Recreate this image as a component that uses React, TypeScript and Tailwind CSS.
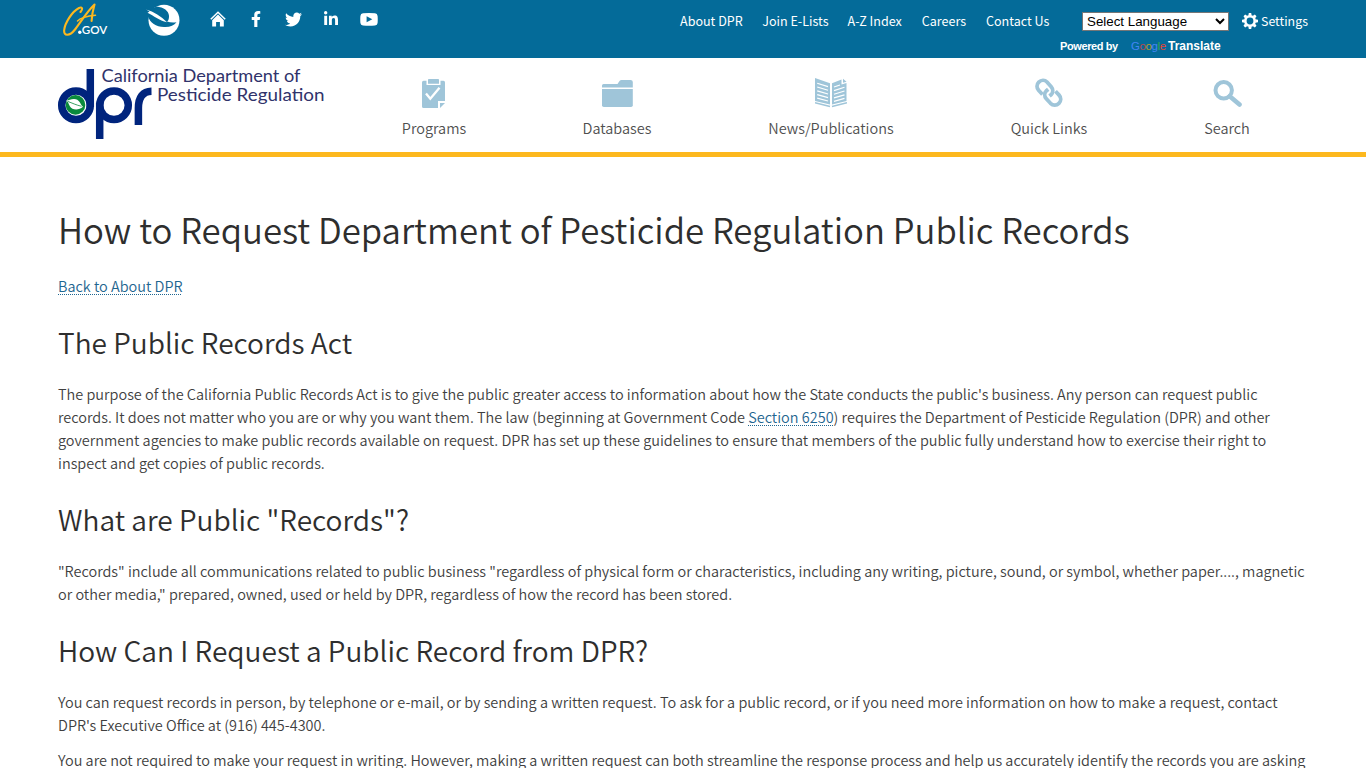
import React from 'react';
import { FaFacebookF, FaTwitter, FaLinkedinIn } from 'react-icons/fa';

const CaGovLogo = () => (
  <svg width="46" height="35" viewBox="0 0 46 35" fill="none">
    <path d="M17.500 9C20 6 19.500 3.500 16 5C9 8.500 2 20 1.200 27C0.500 33.500 6.500 33.500 12 26.500C16 21.500 24 8.500 31.500 1.500C29.800 7.500 28.800 12 28.600 18" stroke="#fdb81e" strokeWidth="2.100" strokeLinecap="round" strokeLinejoin="round" />
    <path d="M14.500 18C18 14.500 26 12.800 32.500 12.200" stroke="#fdb81e" strokeWidth="1.500" strokeLinecap="round" />
    <circle cx="16.800" cy="29.300" r="1.700" fill="#fff" />
    <text x="18.800" y="31" textLength="25.500" lengthAdjust="spacingAndGlyphs" fontSize="11.500" fontWeight="600" fill="#fff" fontFamily="Lato, sans-serif">GOV</text>
  </svg>
);

const EpaLogo = () => (
  <svg width="34" height="34" viewBox="0 0 34 34">
    <circle cx="18" cy="17.200" r="15.500" fill="#fff" />
    <path d="M2 13C3 7 8 2.800 13 4C20 5 23.500 10 23 14C22.700 17 22 18 21 18.500C24 19.600 27 19.800 30.500 19.300C28 22.500 24 24.300 18 24C10 23.800 4 20 2 13Z" fill="#046b99" />
    <path d="M0 6.500L3.500 8.600L1.500 9.800C8 13 13 17.500 21 19.200C15 13 8 8.800 0 6.500Z" fill="#fff" />
  </svg>
);

const HomeIcon = () => (
  <svg width="16" height="16" viewBox="0 0 16 16" fill="none">
    <path d="M0.800 8.300L8 1.200L15.200 8.300" stroke="#fff" strokeWidth="1.500" />
    <path d="M8 3.600L13.800 9.300V15.500H9.900V11H6.100V15.500H2.200V9.300Z" fill="#fff" />
  </svg>
);

const YoutubeIcon = () => (
  <svg width="18" height="13" viewBox="0 0 18 13">
    <path fillRule="evenodd" d="M3 0.300Q9 -0.200 15 0.300Q17.400 0.500 17.600 3Q17.900 6.500 17.600 10Q17.400 12.300 15 12.500Q9 12.900 3 12.500Q0.600 12.300 0.400 10Q0.100 6.500 0.400 3Q0.600 0.500 3 0.300ZM6.600 3.300V9.300L12.300 6.300Z" fill="#fff" />
  </svg>
);

const GearIcon = () => (
  <svg width="16" height="16" viewBox="-8 -8 16 16">
    <circle r="4.700" fill="none" stroke="#fff" strokeWidth="2.600" />
    {[0, 45, 90, 135, 180, 225, 270, 315].map((a) => (
      <path key={a} d="M-1.700 -5.300L-1.200 -8H1.200L1.700 -5.300Z" fill="#fff" transform={`rotate(${a})`} />
    ))}
  </svg>
);

const DprLogo = () => (
  <svg className="overflow-visible" width="270" height="72" viewBox="0 0 270 72" fill="none">
    <g stroke="#00247d" strokeWidth="7.500">
      <circle cx="18" cy="36.300" r="14.300" />
      <path d="M32.300 0V38" />
      <circle cx="56" cy="36.300" r="14.300" />
      <path d="M41.700 34V70" />
      <path d="M80.400 56V39C80.400 28 85 22.300 93.500 22.200" />
    </g>
    <circle cx="17.500" cy="35.900" r="9.800" fill="#0a8a3c" />
    <path d="M8.500 31.500C11 31.500 12.500 30 16 30C21.500 30 22 35 25 37.800C20.500 42 14 41 12 37.500C10.500 35 10.500 33 8.500 31.500Z" fill="#fff" />
    <path d="M10 32.500C14 34 18 36 23.500 37.300" stroke="#0a8a3c" strokeWidth="0.800" />
    <g fill="#30336b" fontFamily="Lato, sans-serif" fontSize="16.500" fontWeight="400">
      <text x="43.500" y="13" textLength="199" lengthAdjust="spacingAndGlyphs">California Department of</text>
      <text x="99" y="31.700" textLength="167.500" lengthAdjust="spacingAndGlyphs">Pesticide Regulation</text>
    </g>
  </svg>
);

const ClipboardIcon = () => (
  <svg className="mr-px" width="23" height="29" viewBox="0 0 23 29">
    <path d="M0 3.500Q0 1.800 1.600 1.800H4.500V6H18.500V1.800H21.500Q23 1.800 23 3.500V22H16V29H1.600Q0 29 0 27.400Z" fill="#9fc5d9" />
    <path d="M6 0.700Q6 0 6.700 0H16.300Q17 0 17 0.700V4.700H6Z" fill="#9fc5d9" />
    <path d="M18 24H23L18 29Z" fill="#9fc5d9" />
    <path d="M4 14.500L8.300 19.800L17.500 8.800" stroke="#fff" strokeWidth="2.300" fill="none" />
  </svg>
);

const FolderIcon = () => (
  <svg width="31" height="27" viewBox="0 0 31 27" fill="#9fc5d9">
    <path d="M0 7.600V5.500Q0 4 1.600 4H15.500L17.500 1Q18.200 0 19.500 0H28.500Q30.800 0 30.800 2V7.600Z" />
    <path d="M0 9H30.800V25.300Q30.800 27 29 27H1.800Q0 27 0 25.300Z" />
  </svg>
);

const NewsIcon = () => (
  <svg width="32" height="30" viewBox="0 0 32 30">
    <path d="M0 0L15 5.300V26.500L0 23ZM17 5.300L26.500 1.500V6.500L31.500 5V23L17 26.500Z" fill="#9fc5d9" />
    <path d="M28 0.800L31.500 3.800L28 4.800Z" fill="#9fc5d9" />
    <path d="M0 24.800L15 28.600M32 24.800L17 28.600" stroke="#9fc5d9" strokeWidth="1.500" />
    <path d="M2.200 5.200L13 8.600M2.200 9L13 12.300M2.200 12.800L13 16M2.200 16.600L13 19.600M2.200 20.200L13 23M19 9L25 7M19 12.600L29.500 9.300M19 16.300L29.500 13M19 19.900L29.500 16.800M19 23.300L29.500 20.400" stroke="#fff" strokeWidth="1.200" />
  </svg>
);

const LinksIcon = () => (
  <svg width="28" height="30" viewBox="0 0 28 30" fill="none" stroke="#9fc5d9" strokeWidth="3.800">
    <path d="M7.500 16.500L3.600 12.300C1.500 9.800 1.500 6.500 3.800 4.200C6.200 1.800 9.700 1.700 12 4L16.200 8.700C18.200 11 18.300 14.500 16 16.800L14.500 18" />
    <path d="M13.200 11.300L11.500 12.700C9.200 15 9.200 18.500 11.300 20.800L15.500 25.300C18 27.800 21.500 27.700 23.900 25.300C26.200 23 26.300 19.500 24.100 17.100L20.500 13.200" />
  </svg>
);

const SearchIcon = () => (
  <svg width="29" height="27" viewBox="0 0 29 27" fill="none" stroke="#9fc5d9">
    <circle cx="10.700" cy="10.300" r="8.200" strokeWidth="4" />
    <path d="M16.700 16.300L26.500 24.500" strokeWidth="4.600" strokeLinecap="round" />
  </svg>
);

const topLinks = [
  { label: 'About DPR', width: 'w-[63px]' },
  { label: 'Join E-Lists', width: 'w-[66px]' },
  { label: 'A-Z Index', width: 'w-[55px]' },
  { label: 'Careers', width: 'w-[45px]' },
  { label: 'Contact Us', width: 'w-[64px]' },
];

const navItems = [
  { label: 'Programs', icon: <ClipboardIcon />, width: 'w-[64px]' },
  { label: 'Databases', icon: <FolderIcon />, width: 'w-[69px]' },
  { label: 'News/Publications', icon: <NewsIcon />, width: 'w-[126px]' },
  { label: 'Quick Links', icon: <LinksIcon />, width: 'w-[77px]' },
  { label: 'Search', icon: <SearchIcon />, width: 'w-[46px]' },
];

const Heading = ({ children }: { children: React.ReactNode }) => (
  <h2 className="mt-[27px] mb-[22px] text-[28.09px] leading-[36px] text-[#2e2e2e]">{children}</h2>
);

const Link = ({ children }: { children: React.ReactNode }) => (
  <a href="#" className="text-[#1f6690] underline decoration-dotted decoration-1 underline-offset-[2px]">{children}</a>
);

export default function App() {
  return (
    <div className="h-[768px] overflow-hidden bg-white font-['Noto_Sans_CJK_SC',sans-serif] text-[14.485px] font-[350] leading-[23px] text-[#3f3f3f]">
      {/* Utility bar */}
      <div className="flex h-[58px] items-start bg-[#046b99] pl-[63px] text-white">
        <div className="mt-[3px] w-[83px]"><CaGovLogo /></div>
        <div className="mt-[3px] w-16"><EpaLogo /></div>
        <div className="mt-[11px] flex h-4 items-center">
          <div className="w-[35px]"><HomeIcon /></div>
          <div className="w-10 pl-[3px]"><FaFacebookF size={16} /></div>
          <div className="w-[38px]"><FaTwitter size={17} /></div>
          <div className="w-[37px]"><FaLinkedinIn size={16} /></div>
          <YoutubeIcon />
        </div>
        <div className="ml-[302px] flex h-[41px] items-center gap-[19.25px] whitespace-nowrap text-[12.55px] font-normal">
          {topLinks.map((link) => (
            <a key={link.label} href="#" className={link.width}>{link.label}</a>
          ))}
        </div>
        <div className="ml-[9px] mt-3 w-[183px] font-['Liberation_Sans',Arial,sans-serif]">
          <select className="ml-[23px] block h-[19px] w-[147px] border border-[#767676] bg-white text-[13.33px] font-normal leading-none text-black">
            <option>Select Language</option>
          </select>
          <div className="mt-[5px] flex items-center text-[11px] font-bold leading-5">
            <span className="w-[72px] pl-px tracking-[-0.4px]">Powered by</span>
            <span className="flex w-[37px] text-[11.5px] font-normal tracking-[-0.4px]">
              <span className="text-[#4285f4]">G</span>
              <span className="text-[#b8474f]">o</span>
              <span className="text-[#b59a2c]">o</span>
              <span className="text-[#4285f4]">g</span>
              <span className="text-[#34a853]">l</span>
              <span className="text-[#ea4335]">e</span>
            </span>
            <span className="text-[12px]">Translate</span>
          </div>
        </div>
        <a href="#" className="flex h-[42px] items-center gap-[3px] text-[12.4px] font-normal">
          <GearIcon />
          Settings
        </a>
      </div>

      {/* Branding and main navigation */}
      <header className="flex h-[99px] border-b-[5px] border-[#fdb81e] pl-[58px]">
        <div className="mt-[11px] w-[344px]"><DprLogo /></div>
        <nav className="flex gap-[116.5px]">
          {navItems.map((item) => (
            <a key={item.label} href="#" className={`${item.width} flex flex-col items-center whitespace-nowrap text-[#4f4f4f]`}>
              <span className="mt-[21px] flex h-7 items-center justify-center">{item.icon}</span>
              <span className="mt-[9px]">{item.label}</span>
            </a>
          ))}
        </nav>
      </header>

      <main className="whitespace-nowrap pl-[58px] pt-[49px]">
        <h1 className="mb-[22px] text-[34.75px] leading-[46px] text-[#2e2e2e]">
          How to Request Department of Pesticide Regulation Public Records
        </h1>
        <p><Link>Back to About DPR</Link></p>

        <Heading>The Public Records Act</Heading>
        <p>
          The purpose of the California Public Records Act is to give the public greater access to information about how the State conducts the public's business. Any person can request public<br />
          records. It does not matter who you are or why you want them. The law (beginning at Government Code <Link>Section 6250</Link>) requires the Department of Pesticide Regulation (DPR) and other<br />
          government agencies to make public records available on request. DPR has set up these guidelines to ensure that members of the public fully understand how to exercise their right to<br />
          inspect and get copies of public records.
        </p>

        <Heading>What are Public "Records"?</Heading>
        <p>
          "Records" include all communications related to public business "regardless of physical form or characteristics, including any writing, picture, sound, or symbol, whether paper...., magnetic<br />
          or other media," prepared, owned, used or held by DPR, regardless of how the record has been stored.
        </p>

        <Heading>How Can I Request a Public Record from DPR?</Heading>
        <p>
          You can request records in person, by telephone or e-mail, or by sending a written request. To ask for a public record, or if you need more information on how to make a request, contact<br />
          DPR's Executive Office at (916) 445-4300.
        </p>
        <p className="mt-3">
          You are not required to make your request in writing. However, making a written request can both streamline the response process and help us accurately identify the records you are asking
        </p>
      </main>
    </div>
  );
}
